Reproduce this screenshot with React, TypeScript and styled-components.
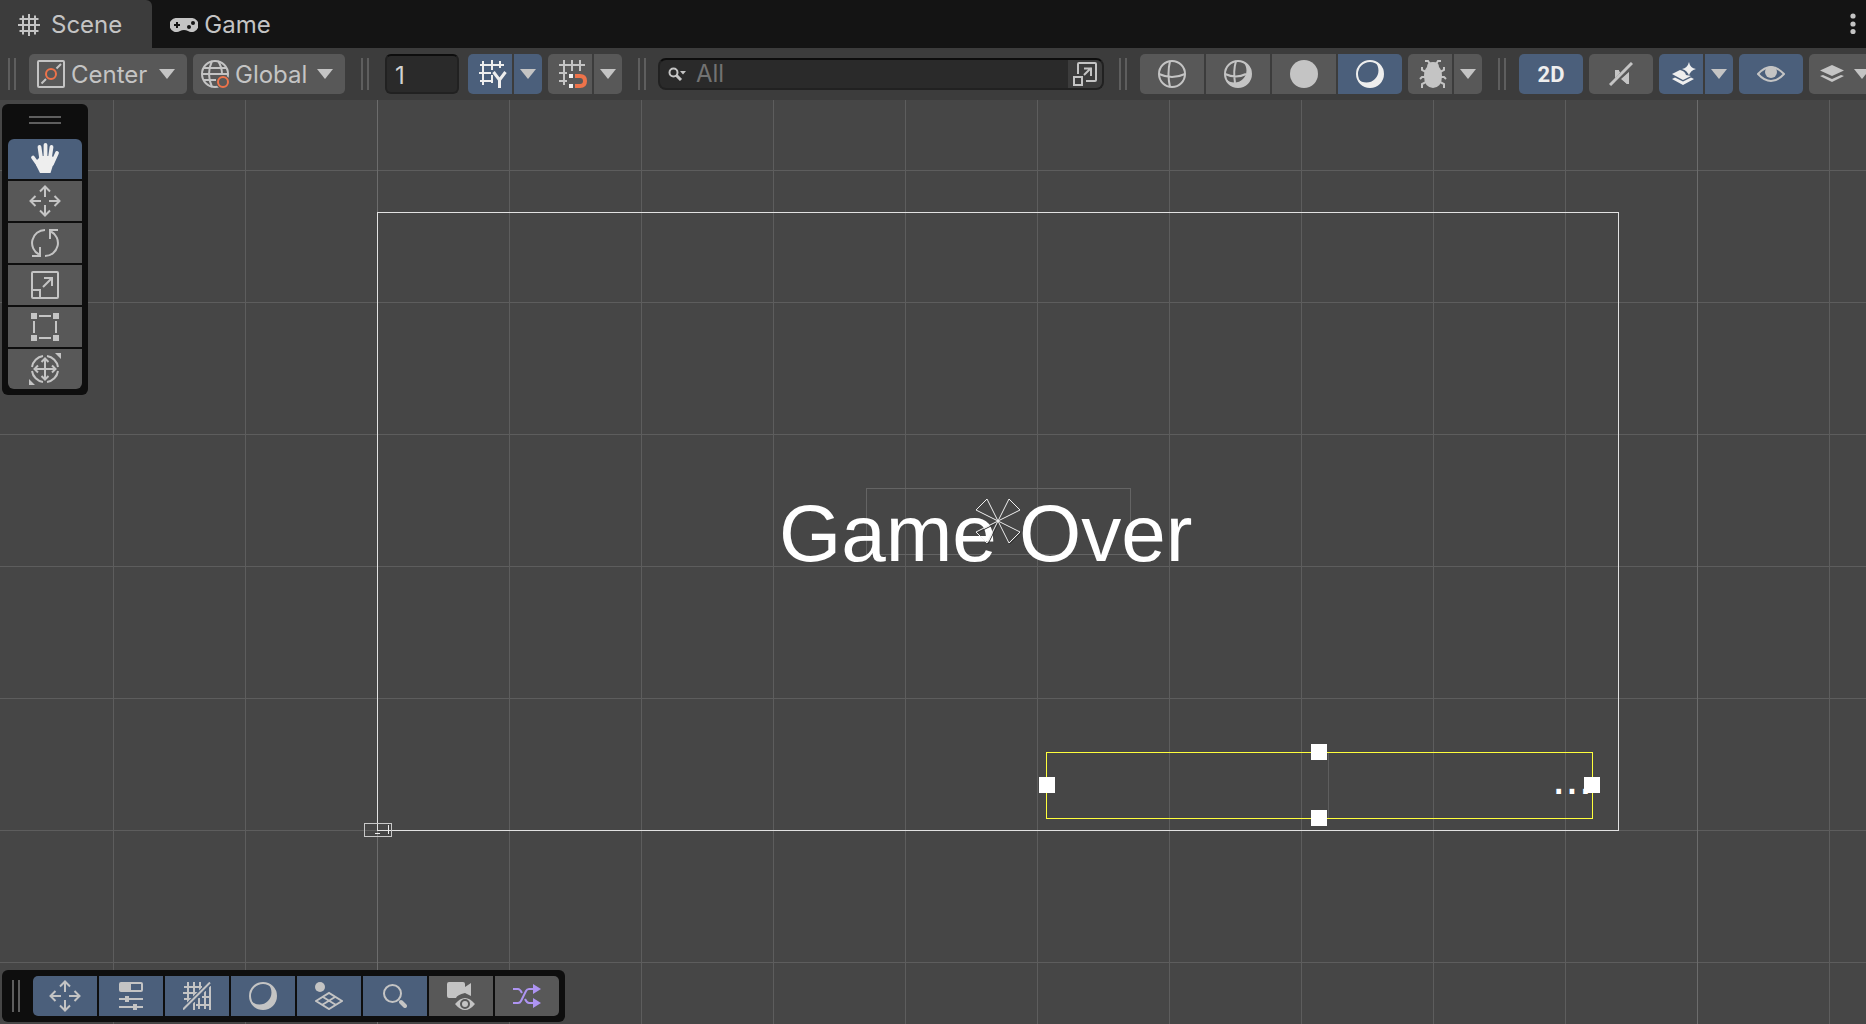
import React from "react";
import styled, { createGlobalStyle, css } from "styled-components";

const color = {
  chrome: "#3c3c3c",
  tabStrip: "#141414",
  button: "#585858",
  active: "#4b5f7b",
  field: "#2a2a2a",
  icon: "#c4c4c4",
  iconOn: "#eeeeee",
  line: "#5e5e5e",
  scene: "#464646",
  overlay: "#0e0e0e",
  orange: "#ee734a",
  purple: "#ae94f2",
};

const GlobalStyle = createGlobalStyle`
  *, *::before, *::after { box-sizing: border-box; }
  body { margin: 0; background: ${color.scene}; }
  button, input, select { font: inherit; color: inherit; margin: 0; }
`;

const Shell = styled.div`
  display: flex;
  flex-direction: column;
  height: 100vh;
  overflow: hidden;
  font-family: Inter, "Liberation Sans", sans-serif;
  font-size: 24px;
  line-height: 28px;
  color: ${color.icon};
`;

const TabStrip = styled.nav`
  display: flex;
  flex: none;
  height: 48px;
  background: ${color.tabStrip};
`;

const Tab = styled.button<{ $active?: boolean }>`
  display: flex;
  align-items: center;
  gap: ${(p) => (p.$active ? 11 : 6)}px;
  padding: 2px ${(p) => (p.$active ? 30 : 18)}px 0 18px;
  border: 0;
  border-radius: 0 6px 0 0;
  background: ${(p) => (p.$active ? color.chrome : "transparent")};
`;

const MenuButton = styled.button`
  display: flex;
  align-items: center;
  justify-content: center;
  width: 26px;
  margin-left: auto;
  padding: 0;
  border: 0;
  background: transparent;
`;

const Toolbar = styled.header`
  display: flex;
  flex: none;
  align-items: center;
  height: 52px;
  padding-left: 8px;
  background: ${color.chrome};
  overflow: hidden;
`;

const Handle = styled.span<{ $gap?: string; $horizontal?: boolean }>`
  flex: none;
  margin: ${(p) => p.$gap ?? "0"};
  ${(p) =>
    p.$horizontal
      ? css`
          width: 32px;
          height: 8px;
          border-top: 2px solid ${color.line};
          border-bottom: 2px solid ${color.line};
        `
      : css`
          width: 8px;
          height: 32px;
          border-left: 2px solid ${color.line};
          border-right: 2px solid ${color.line};
        `}
`;

const Group = styled.div<{ $after?: number; $gap?: number }>`
  display: flex;
  flex: none;
  gap: ${(p) => p.$gap ?? 2}px;
  margin-right: ${(p) => p.$after ?? 0}px;
  > button { border-radius: 0; }
  > button:first-child { border-radius: 5px 0 0 5px; }
  > button:last-child { border-radius: 0 5px 5px 0; }
  > button:only-child { border-radius: 5px; }
`;

const ToolButton = styled.button<{ $kind?: "wide" | "main" | "caret" | "side" | "layers"; $on?: boolean }>`
  display: flex;
  flex: none;
  align-items: center;
  justify-content: center;
  height: 40px;
  width: ${(p) => ({ wide: 64, main: 44, caret: 28, side: 74, layers: 72 })[p.$kind ?? "wide"]}px;
  padding: 0;
  padding-left: ${(p) => (p.$kind === "main" ? 6 : 0)}px;
  gap: ${(p) => (p.$kind === "layers" ? 10 : 0)}px;
  border: 0;
  background: ${(p) => (p.$on ? color.active : color.button)};
`;

const BoldLabel = styled.span`
  padding-top: 2px;
  font-family: Roboto, sans-serif;
  font-weight: 700;
  font-size: 22px;
  color: ${color.iconOn};
`;

const SelectWrap = styled.label<{ $width: number }>`
  display: grid;
  flex: none;
  grid-template-columns: 42px 1fr 28px;
  align-items: center;
  width: ${(p) => p.$width}px;
  height: 40px;
  border-radius: 5px;
  background: ${color.button};
  > svg { grid-row: 1; pointer-events: none; }
  > svg:first-of-type { grid-column: 1; margin-left: 8px; }
  > svg:last-of-type { grid-column: 3; }
`;

const Select = styled.select`
  grid-column: 1 / -1;
  grid-row: 1;
  width: 100%;
  height: 40px;
  padding: 2px 28px 0 42px;
  border: 0;
  appearance: none;
  background: transparent;
`;

const fieldStyle = css`
  border: 2px solid #212121;
  border-top-color: #0d0d0d;
  background: ${color.field};
`;

const NumberField = styled.input`
  ${fieldStyle}
  flex: none;
  width: 74px;
  height: 40px;
  padding: 2px 8px 0;
  border-radius: 6px;
  color: #d2d2d2;
`;

const SearchField = styled.div`
  ${fieldStyle}
  display: flex;
  flex: 1 0 446px;
  align-items: center;
  height: 32px;
  padding-left: 8px;
  border-radius: 8px;
  overflow: hidden;
`;

const SearchInput = styled.input`
  flex: 1;
  min-width: 0;
  height: 28px;
  padding: 0 10px;
  border: 0;
  background: transparent;
  &::placeholder { color: #727272; opacity: 1; }
`;

const ExpandButton = styled.button`
  display: flex;
  flex: none;
  align-items: center;
  justify-content: center;
  width: 34px;
  height: 28px;
  padding: 0;
  border: 0;
  background: ${color.chrome};
`;

const Scene = styled.main`
  position: relative;
  flex: 1;
  overflow: hidden;
  background-color: ${color.scene};
  background-image: linear-gradient(90deg, #6c6c6c 1px, transparent 1px),
    linear-gradient(90deg, #5d5d5d 1px, transparent 1px),
    linear-gradient(#5d5d5d 1px, transparent 1px);
  background-size: 1320px 132px, 132px 132px, 132px 132px;
  background-position: 377px 0, 113px 0, 0 70px;
`;

/* Objects living on the free scene canvas, in scene coordinates. */
const SceneRect = styled.div<{ $x: number; $y: number; $w: number; $h: number; $stroke?: string; $fill?: string }>`
  position: absolute;
  left: ${(p) => p.$x}px;
  top: ${(p) => p.$y}px;
  width: ${(p) => p.$w}px;
  height: ${(p) => p.$h}px;
  border: ${(p) => (p.$stroke ? `1px solid ${p.$stroke}` : "0")};
  background: ${(p) => p.$fill ?? "transparent"};
`;

const SceneText = styled.div<{ $x: number; $y: number; $size: number }>`
  position: absolute;
  left: ${(p) => p.$x}px;
  top: ${(p) => p.$y}px;
  font-family: "Liberation Sans", Arial, sans-serif;
  font-size: ${(p) => p.$size}px;
  line-height: ${(p) => p.$size}px;
  white-space: nowrap;
  color: #ffffff;
`;

const Gizmo = styled.svg`
  position: absolute;
  left: 974px;
  top: 397px;
`;

const Tools = styled.aside`
  position: absolute;
  left: 2px;
  top: 4px;
  display: flex;
  flex-direction: column;
  align-items: center;
  gap: 2px;
  padding: 12px 6px 6px;
  border-radius: 6px;
  background: ${color.overlay};
  > button:nth-of-type(1) { border-radius: 6px 6px 0 0; }
  > button:last-of-type { border-radius: 0 0 6px 6px; }
`;

const Overlays = styled.footer`
  position: absolute;
  left: 2px;
  bottom: 2px;
  display: flex;
  align-items: center;
  height: 52px;
  padding: 0 6px 0 10px;
  border-radius: 6px;
  background: ${color.overlay};
`;

const Svg = styled.svg`
  display: block;
  flex: none;
  fill: none;
  stroke: currentColor;
  stroke-width: 2;
`;

type IconProps = { w?: number; h?: number; tint?: string; children: React.ReactNode };
const Icon = ({ w = 28, h = w, tint = color.icon, children }: IconProps) => (
  <Svg width={w} height={h} viewBox={`0 0 ${w} ${h}`} color={tint} aria-hidden="true">
    {children}
  </Svg>
);
const solid = { fill: "currentColor", stroke: "none" };
const crescent = "M18.950 1.970A13 13 0 1 1 1.970 18.950A12 12 0 0 0 18.950 1.970Z";

const Caret = () => (
  <Icon w={16} h={10}><path {...solid} d="M0 0H16L8 10Z" /></Icon>
);
const SceneIcon = () => (
  <Icon w={22}><path d="M5 1.500V20.500M11 0V22M17 1.500V20.500M1.500 5H20.500M0 11H22M1.500 17H20.500" /></Icon>
);
const GameIcon = () => (
  <Icon h={14}>
    <path {...solid} d="M7 0H21A7 7 0 1 1 18 13Q14 11 10 13A7 7 0 1 1 7 0Z" />
    <path stroke={color.tabStrip} d="M4 7H10M7 4V10" />
    <g fill={color.tabStrip} stroke="none"><circle cx="19" cy="9" r="2" /><circle cx="23" cy="5" r="2" /></g>
  </Icon>
);
const Dots = () => (
  <Icon w={6} h={22}>
    <g {...solid}><circle cx="3" cy="3" r="2.600" /><circle cx="3" cy="11" r="2.600" /><circle cx="3" cy="18.500" r="2.600" /></g>
  </Icon>
);
const CenterIcon = () => (
  <Icon>
    <rect x="1" y="1" width="26" height="26" rx="1" />
    <path d="M4.500 23.500L9 19M19.500 8.500L24 4" />
    <circle cx="14" cy="14" r="5" stroke={color.orange} />
  </Icon>
);
const GlobalIcon = () => (
  <Icon>
    <circle cx="14" cy="14" r="13" />
    <path d="M11 1Q5 14 11 27M17 1Q21 7 21 14M3 8H25M1 14H27M3 20H15" />
    <circle cx="22" cy="22" r="7" fill={color.button} stroke="none" />
    <circle cx="22" cy="22" r="5" stroke={color.orange} />
  </Icon>
);
const GridYIcon = () => (
  <Icon tint={color.iconOn}>
    <path d="M4 1V25M13 0V10M13 15V23M21 1V8M1 5H25M0 13H12M1 21H14" />
    <path strokeWidth="3" d="M14.500 12L20.500 20L26.500 12M20.500 19V28" />
  </Icon>
);
const SnapIcon = () => (
  <Icon>
    <path d="M5 0V25M13 0V11M21 0V11M0 5H26M0 13H8M0 21H8" />
    <path {...solid} fill={color.iconOn} d="M10 14H14V18H10ZM10 24H14V28H10Z" />
    <path stroke={color.orange} strokeWidth="4" d="M16 16H21Q26 16 26 21T21 26H16" />
  </Icon>
);
const SearchIcon = () => (
  <Icon w={18} h={14}>
    <circle cx="5.500" cy="5.500" r="4" /><path strokeWidth="3" d="M8.500 8.500L13 13" />
    <path {...solid} d="M12 4H18L15 7.500Z" />
  </Icon>
);
const ExpandIcon = () => (
  <Icon w={24}>
    <path d="M5 12V2Q5 1 6 1H22Q23 1 23 2V18Q23 19 22 19H13" /><rect x="1" y="15" width="8" height="8" /><path d="M11 13L18 6M11 6.500H18V14" />
  </Icon>
);
const WireIcon = () => (
  <Icon><circle cx="14" cy="14" r="13" /><path d="M12 1Q9 14 12 27M1 14Q14 20 27 14" /></Icon>
);
const ShadedWireIcon = () => (
  <Icon>
    <circle cx="14" cy="14" r="13" /><path d="M12 1Q9 11 11 23M1 14Q12 19 22 14" />
    <path {...solid} d={crescent} />
  </Icon>
);
const FlatIcon = () => <Icon><circle {...solid} cx="14" cy="14" r="14" /></Icon>;
const MoonIcon = ({ tint }: { tint?: string }) => (
  <Icon tint={tint}>
    <circle cx="14" cy="14" r="13" />
    <path {...solid} d={crescent} />
  </Icon>
);
const BugIcon = () => (
  <Icon>
    <path {...solid} d="M8 7Q8 2 14 2T20 7Q23 10 23 16Q23 27 14 28Q5 27 5 16Q5 10 8 7Z" />
    <path d="M11 4L9 1H6M17 4L19 1H22M7 12L3 10V7M21 12L25 10V7M6 17H3L1 19M22 17H25L27 19M7 22L3 24V28M21 22L25 24V28" />
  </Icon>
);
const MuteIcon = () => (
  <Icon w={24}>
    <path {...solid} d="M6 8H9L11 10V12L6 18ZM12 16L20 9V22H18Z" />
    <path strokeWidth="6" stroke={color.button} d="M2 24L24 2" />
    <path strokeWidth="3" d="M1 23L23 1" />
    <path {...solid} d="M6 8H10V12L6 16ZM12 17L20 10V22H18Z" />
  </Icon>
);
const EffectsIcon = () => (
  <Icon w={24} tint={color.iconOn}>
    <path {...solid} d="M0 12L8 8Q13 9 14 13L19 14L11 18Z" />
    <path {...solid} d="M0 17L3 15.500L11 19.500L19 15.500L22 17L11 23Z" />
    <path {...solid} d="M17 0Q18 6 24 7Q18 8.500 17 14Q15.500 8.500 10 7Q15.500 6 17 0Z" />
  </Icon>
);
const EyeIcon = () => (
  <Icon h={16}>
    <path d="M1 8Q14 -6 27 8Q14 22 1 8Z" /><circle {...solid} cx="14" cy="6" r="6" />
  </Icon>
);
const LayersIcon = () => (
  <Icon w={24} h={18}>
    <path {...solid} d="M12 0L24 5.500L12 11L0 5.500ZM0 11L3 10L12 14L21 10L24 11L12 17Z" />
  </Icon>
);
const HandIcon = () => (
  <Icon w={32} tint={color.iconOn}>
    <path {...solid} d="M8 17L12 13H22L27 15L24 22L21.500 30H11L7 22Z" />
    <path strokeWidth="3.800" strokeLinecap="round" d="M4 14.500L10 23M10.500 4L12.500 18M16.500 2V18M22.500 4L20.500 18M28 10L23 21" />
  </Icon>
);
const MoveIcon = () => (
  <Icon w={32}>
    <g transform="translate(16 16)">
      {[0, 90, 180, 270].map((a) => (
        <path key={a} transform={`rotate(${a})`} d="M0 -14V-4M-5 -9.500L0 -14.500L5 -9.500" />
      ))}
    </g>
  </Icon>
);
const RotateIcon = () => (
  <Icon><path d="M14 1A13 13 0 0 0 8 25.500M1 27H9V18M14 27A13 13 0 0 0 20 2.500M27 1H19V10" /></Icon>
);
const ScaleIcon = () => (
  <Icon><rect x="1" y="1" width="26" height="26" rx="1" /><path d="M1 19H9V27M12 16L21 7M13 7H21V15" /></Icon>
);
const RectIcon = () => (
  <Icon>
    <path {...solid} d="M0 0H6V6H0ZM22 0H28V6H22ZM0 22H6V28H0ZM22 22H28V28H22Z" />
    <path d="M8 3H20M8 25H20M3 8V20M25 8V20" />
  </Icon>
);
const TransformIcon = () => (
  <Icon w={32}>
    <path d="M18 3A13 13 0 0 1 29 14M29 18A13 13 0 0 1 18 29M14 29A13 13 0 0 1 3 18M3 14A13 13 0 0 1 14 3" />
    <path d="M16 6V26M6 16H26M12.500 9L16 5.500L19.500 9M12.500 23L16 26.500L19.500 23M9 12.500L5.500 16L9 19.500M23 12.500L26.500 16L23 19.500" />
    <path {...solid} d="M26 0H32V6ZM0 26V32H6Z" />
  </Icon>
);
const OptionsIcon = () => (
  <Icon w={24} h={28}>
    <path {...solid} fillRule="evenodd" d="M2 0H22Q24 0 24 2V8Q24 10 22 10H2Q0 10 0 8V2Q0 0 2 0ZM12 2V8H22V2Z" />
    <path d="M0 17H24M0 25H24" /><path strokeWidth="4" d="M8 14V20M16 22V28" />
  </Icon>
);
const GridOffIcon = () => (
  <Icon>
    <path d="M5 0V22M11 0V16M17 0V10M1 5H19M0 11H16M1 17H10M11 20V28M16 16V27M22 9V27M27 0V28M13 23H28M19 15H28" />
    <path stroke={color.active} strokeWidth="5" d="M0 28L28 0" />
    <path d="M0 27.500L27 0.500M27 8V28" />
  </Icon>
);
const GroundIcon = () => (
  <Icon>
    <circle {...solid} cx="5" cy="5" r="5" />
    <path d="M1 19L14 11L27 19L14 27ZM8 15L21 23M20 15L7 23" />
  </Icon>
);
const ZoomIcon = () => (
  <Icon w={24}>
    <circle cx="9.500" cy="9.500" r="8.500" /><path strokeWidth="4" strokeLinecap="round" d="M18 18L22 22" />
  </Icon>
);
const CameraIcon = () => (
  <Icon>
    <path {...solid} d="M2 0H16Q18 0 18 2V5L24 1V14L18 11Q10 13 9 16H2Q0 16 0 14V2Q0 0 2 0Z" />
    <path {...solid} fillRule="evenodd" d="M8 22Q18 10 28 22Q18 34 8 22ZM18 17A5 5 0 1 0 18 27A5 5 0 1 0 18 17Z" />
    <circle {...solid} cx="18" cy="22" r="3" />
  </Icon>
);
const ShuffleIcon = () => (
  <Icon h={24} tint={color.purple}>
    <path d="M0 5H5Q7 5 9 9M0 19H5Q7 19 8 17L13 7Q14 5 16 5H21M12 15Q14 19 16 19H21" />
    <path {...solid} d="M20 0L28 5L20 10ZM20 14L28 19L20 24Z" />
  </Icon>
);

const sideTools = [
  { name: "View", icon: <HandIcon /> },
  { name: "Move", icon: <MoveIcon /> },
  { name: "Rotate", icon: <RotateIcon /> },
  { name: "Scale", icon: <ScaleIcon /> },
  { name: "Rect", icon: <RectIcon /> },
  { name: "Transform", icon: <TransformIcon /> },
];

const overlayToggles = [
  { name: "Tools", icon: <MoveIcon />, on: true },
  { name: "Tool settings", icon: <OptionsIcon />, on: true },
  { name: "Grid and snap", icon: <GridOffIcon />, on: true },
  { name: "Draw modes", icon: <MoonIcon />, on: true },
  { name: "View options", icon: <GroundIcon />, on: true },
  { name: "Search", icon: <ZoomIcon />, on: true },
  { name: "Cameras", icon: <CameraIcon />, on: false },
  { name: "Random", icon: <ShuffleIcon />, on: false },
];

const drawModes = [
  { name: "Wireframe", icon: <WireIcon /> },
  { name: "Shaded wireframe", icon: <ShadedWireIcon /> },
  { name: "Unlit", icon: <FlatIcon /> },
  { name: "Shaded", icon: <MoonIcon tint={color.iconOn} />, on: true },
];

const resizeHandles = [
  { x: 1311, y: 644 },
  { x: 1311, y: 710 },
  { x: 1039, y: 677 },
  { x: 1584, y: 677 },
];

const SplitButton = ({ name, on, after, children }: { name: string; on?: boolean; after?: number; children: React.ReactNode }) => (
  <Group $after={after}>
    <ToolButton $kind="main" $on={on} aria-label={name}>{children}</ToolButton>
    <ToolButton $kind="caret" $on={on} aria-label={`${name} options`}><Caret /></ToolButton>
  </Group>
);

export default function App() {
  return (
    <Shell>
      <GlobalStyle />
      <TabStrip>
        <Tab $active><SceneIcon />Scene</Tab>
        <Tab><GameIcon />Game</Tab>
        <MenuButton aria-label="Menu"><Dots /></MenuButton>
      </TabStrip>

      <Toolbar>
        <Handle $gap="0 13px 0 0" />
        <Group $gap={6} $after={16}>
          <SelectWrap $width={158}>
            <CenterIcon />
            <Select aria-label="Pivot" defaultValue="Center"><option>Center</option><option>Pivot</option></Select>
            <Caret />
          </SelectWrap>
          <SelectWrap $width={152}>
            <GlobalIcon />
            <Select aria-label="Orientation" defaultValue="Global"><option>Global</option><option>Local</option></Select>
            <Caret />
          </SelectWrap>
        </Group>
        <Handle $gap="0 16px 0 0" />
        <Group $after={9}>
          <NumberField aria-label="Grid size" defaultValue="1" />
        </Group>
        <SplitButton name="Grid" on after={6}><GridYIcon /></SplitButton>
        <SplitButton name="Snap" after={16}><SnapIcon /></SplitButton>
        <Handle $gap="0 12px 0 0" />
        <SearchField>
          <SearchIcon />
          <SearchInput aria-label="Search" placeholder="All" />
          <ExpandButton aria-label="Open search"><ExpandIcon /></ExpandButton>
        </SearchField>
        <Handle $gap="0 13px 0 15px" />
        <Group $after={6}>
          {drawModes.map((m) => (
            <ToolButton key={m.name} $on={m.on} aria-label={m.name}>{m.icon}</ToolButton>
          ))}
        </Group>
        <SplitButton name="Debug draw" after={16}><BugIcon /></SplitButton>
        <Handle $gap="0 13px 0 0" />
        <Group $after={6}><ToolButton $on><BoldLabel>2D</BoldLabel></ToolButton></Group>
        <Group $after={6}><ToolButton aria-label="Audio"><MuteIcon /></ToolButton></Group>
        <SplitButton name="Effects" on after={6}><EffectsIcon /></SplitButton>
        <Group $after={6}><ToolButton $on aria-label="Visibility"><EyeIcon /></ToolButton></Group>
        <Group><ToolButton $kind="layers" aria-label="Layers"><LayersIcon /><Caret /></ToolButton></Group>
      </Toolbar>

      <Scene>
        <SceneRect $x={866} $y={388} $w={265} $h={67} $stroke="#646464" />
        <SceneText $x={779} $y={394} $size={80}>Game Over</SceneText>
        <Gizmo width="48" height="48" viewBox="0 0 48 48" fill="none" stroke="#f0f0f0" aria-hidden="true">
          <path stroke="#333333" d="M25 25L14 47L3 36ZM25 25L47 36L36 47Z" />
          <path d="M24 24L2 13L13 2ZM24 24L35 2L46 13ZM24 24L46 35L35 46ZM24 24L13 46L2 35Z" />
        </Gizmo>
        <SceneRect $x={377} $y={112} $w={1242} $h={619} $stroke="#e2e2e2" />
        <SceneRect $x={364} $y={723} $w={28} $h={14} $stroke="#c8c8c8" />
        <SceneRect $x={375} $y={733} $w={5} $h={1} $fill="#f0f0f0" />
        <SceneRect $x={388} $y={725} $w={1} $h={9} $fill="#f0f0f0" />
        <SceneRect $x={1328} $y={653} $w={1} $h={65} $fill="#5e5e5e" />
        <SceneText $x={1552} $y={654} $size={48}>...</SceneText>
        <SceneRect $x={1046} $y={652} $w={547} $h={67} $stroke="#ffff3c" />
        {resizeHandles.map((h) => (
          <SceneRect key={`${h.x}-${h.y}`} $x={h.x} $y={h.y} $w={16} $h={16} $fill="#ffffff" />
        ))}

        <Tools>
          <Handle $horizontal $gap="0 0 13px" />
          {sideTools.map((t, i) => (
            <ToolButton key={t.name} $kind="side" $on={i === 0} aria-label={t.name}>{t.icon}</ToolButton>
          ))}
        </Tools>

        <Overlays>
          <Handle $gap="0 13px 0 0" />
          <Group>
            {overlayToggles.map((t) => (
              <ToolButton key={t.name} $on={t.on} aria-label={t.name}>{t.icon}</ToolButton>
            ))}
          </Group>
        </Overlays>
      </Scene>
    </Shell>
  );
}
